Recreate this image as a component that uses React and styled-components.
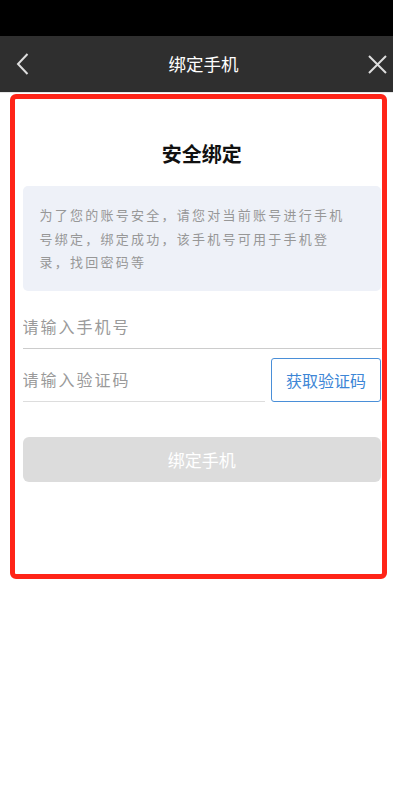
import React from "react";
import styled, { createGlobalStyle } from "styled-components";

const Global = createGlobalStyle`
  html, body { margin: 0; padding: 0; background: #fff; }
  body { font-family: "Noto Sans CJK SC", "Noto Sans", sans-serif; }
  * { box-sizing: border-box; }
`;

const Page = styled.div`
  width: 393px;
  min-height: 803px;
  background: #fff;
  display: flex;
  flex-direction: column;
`;

const StatusBar = styled.div`
  height: 36px;
  background: #000;
`;

const NavBar = styled.div`
  height: 56px;
  background: #2f2f2f;
  display: flex;
  align-items: center;
  justify-content: space-between;
  padding: 0 6px 0 12px;
  border-bottom: 1px solid #e6e6e6;
  box-sizing: content-box;
`;

const NavTitle = styled.div`
  color: #fff;
  font-size: 17.5px;
  line-height: 24px;
  margin-left: 8px;
`;

const IconBtn = styled.div`
  width: 20px;
  height: 24px;
  display: flex;
  align-items: center;
  justify-content: center;
`;

const Frame = styled.div`
  margin: 1px 0 0 10px;
  width: 377px;
  border: 5.5px solid #ff2418;
  border-radius: 6px;
  padding: 43px 1px 92px 7.5px;
  display: flex;
  flex-direction: column;
`;

const Title = styled.h1`
  margin: 0;
  text-align: center;
  font-size: 20px;
  line-height: 24px;
  font-weight: 700;
  color: #111;
`;

const Notice = styled.div`
  margin-top: 20px;
  background: #eef1f8;
  border-radius: 5px;
  padding: 17px 30px 17px 17px;
  font-size: 13px;
  line-height: 23.5px;
  letter-spacing: 2.25px;
  color: #979797;
`;

const Field = styled.input`
  display: block;
  border: none;
  border-bottom: 1px solid ${(p) => p.$line};
  outline: none;
  background: transparent;
  height: 44px;
  padding: 0;
  font-family: inherit;
  font-size: 16px;
  letter-spacing: 2px;
  color: #333;
  width: ${(p) => p.$width || "100%"};
  &::placeholder { color: #9a9a9a; }
`;

const FirstRow = styled.div`
  margin-top: 14px;
`;

const CodeRow = styled.div`
  margin-top: 9px;
  display: flex;
  align-items: flex-end;
  gap: 6px;
`;

const CodeButton = styled.button`
  width: 110px;
  height: 44px;
  flex-shrink: 0;
  border: 1px solid #4a8fd8;
  border-radius: 3px;
  background: #fff;
  color: #3d86d6;
  font-family: inherit;
  font-size: 16px;
  padding: 0;
`;

const SubmitButton = styled.button`
  margin-top: 35px;
  height: 45px;
  width: 100%;
  border: none;
  border-radius: 6px;
  background: #dcdcdc;
  color: #fff;
  font-family: inherit;
  font-size: 17px;
  padding: 0;
`;

export default function App() {
  return (
    <Page>
      <Global />
      <StatusBar />
      <NavBar>
        <IconBtn>
          <svg width="13" height="22" viewBox="0 0 13 22" fill="none">
            <path d="M11.5 1 L2 11 L11.5 21" stroke="#dedede" strokeWidth="2" />
          </svg>
        </IconBtn>
        <NavTitle>绑定手机</NavTitle>
        <IconBtn>
          <svg width="19" height="19" viewBox="0 0 19 19" fill="none">
            <path d="M1 1 L18 18 M18 1 L1 18" stroke="#dedede" strokeWidth="2" />
          </svg>
        </IconBtn>
      </NavBar>
      <Frame>
        <Title>安全绑定</Title>
        <Notice>
          为了您的账号安全，请您对当前账号进行手机号绑定，绑定成功，该手机号可用于手机登录，找回密码等
        </Notice>
        <FirstRow>
          <Field $line="#cccccc" placeholder="请输入手机号" />
        </FirstRow>
        <CodeRow>
          <Field $line="#dddddd" placeholder="请输入验证码" />
          <CodeButton>获取验证码</CodeButton>
        </CodeRow>
        <SubmitButton>绑定手机</SubmitButton>
      </Frame>
    </Page>
  );
}
